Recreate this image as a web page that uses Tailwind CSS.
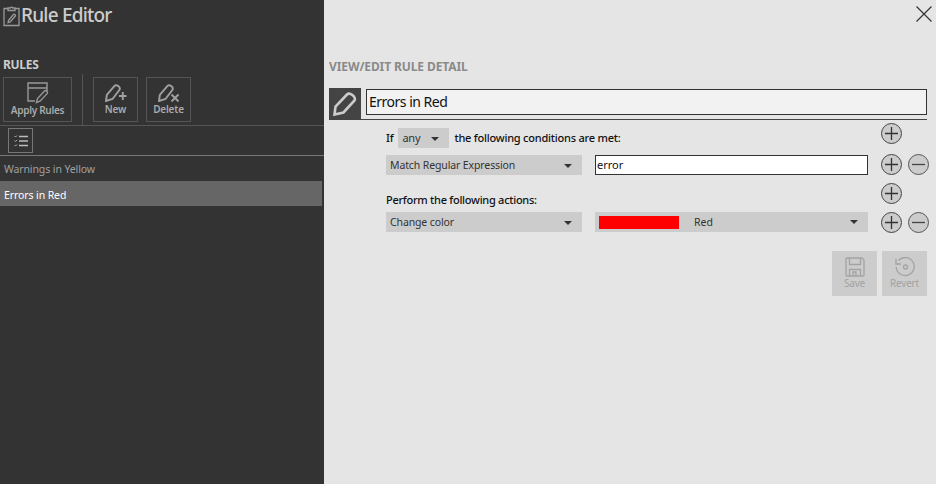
<!DOCTYPE html>
<html>
<head>
<meta charset="utf-8">
<title>Rule Editor</title>
<script src="https://cdn.jsdelivr.net/npm/@tailwindcss/browser@4"></script>
</head>
<body class="m-0 overflow-hidden">
<div class="flex w-[936px] h-[484px] overflow-hidden font-['Noto_Sans',sans-serif] bg-[#e5e5e5]">

  <!-- left panel -->
  <div class="w-[324px] h-full shrink-0 bg-[#333333] flex flex-col">
    <div class="h-[30px] flex items-center pl-[3px] pt-[1px]">
      <svg class="w-[18px] h-[22px]" viewBox="0 0 18 22" fill="none" stroke="#999999" stroke-width="1.300">
        <path d="M5 3.500H1v17h15v-17h-4"/><path d="M5 5.500V3h2.200a1.400 1.400 0 0 1 2.600 0H12v2.500z"/>
        <path d="M5.500 15.500l5-6c.8-.9 2.600.4 1.800 1.500l-5 6-2.200.6z"/>
      </svg>
      <span class="text-[19px] leading-none font-medium text-[#cccccc] tracking-[-0.8px]">Rule Editor</span>
    </div>
    <div class="mt-[28px] pl-[3px] h-[14px] flex items-center text-[12px] font-bold text-[#cccccc] tracking-[-0.3px]">RULES</div>

    <!-- toolbar -->
    <div class="mt-[2px] h-[52px] flex pl-[3px] border-b border-[#555555] items-start">
      <button class="mt-[3px] w-[69px] h-[45px] border border-[#555555] flex flex-col items-center">
        <svg class="w-[22px] h-[22px] mt-[4px]" viewBox="0 0 22 22" fill="none" stroke="#999999" stroke-width="1.400">
          <path d="M1 1h19v5H1zM1 6v13h7M20 6v3"/><path d="M9.500 20.500l1-4 7-7.500c1.200-1.200 3.800.8 2.800 2.400l-7 7.600z"/>
        </svg>
        <span class="text-[10px] leading-[12px] font-semibold text-[#aaaaaa] tracking-[-0.3px]">Apply Rules</span>
      </button>
      <div class="w-px h-[51px] bg-[#555555] mx-[10px]"></div>
      <button class="mt-[3px] w-[45px] h-[45px] border border-[#555555] flex flex-col items-center">
        <svg class="w-[22px] h-[18px] mt-[6px]" viewBox="0 0 22 18" fill="none" stroke="#a0a0a0" stroke-width="1.900">
          <path d="M1 17l.8-6L9.500 1.800c1.800-1.800 6.500 1.200 5 4L7.500 15z"/><path d="M14 12h7.500M17.800 8v8"/>
        </svg>
        <span class="text-[10px] leading-[12px] mt-[1px] font-semibold text-[#aaaaaa] tracking-[-0.2px]">New</span>
      </button>
      <button class="mt-[3px] ml-[8px] w-[45px] h-[45px] border border-[#555555] flex flex-col items-center">
        <svg class="w-[22px] h-[18px] mt-[6px]" viewBox="0 0 22 18" fill="none" stroke="#a0a0a0" stroke-width="1.900">
          <path d="M1 17l.8-6L9.500 1.800c1.800-1.800 6.500 1.200 5 4L7.500 15z"/><path d="M13.500 10.500l7 7M20.500 10.500l-7 7"/>
        </svg>
        <span class="text-[10px] leading-[12px] mt-[1px] font-semibold text-[#aaaaaa] tracking-[-0.2px]">Delete</span>
      </button>
    </div>

    <!-- list tools -->
    <div class="h-[30px] pl-[8px] pt-[2px] border-b border-[#777777]">
      <button class="w-[25px] h-[25px] border border-[#777777] flex items-center justify-center">
        <svg class="w-[14px] h-[12px]" viewBox="0 0 14 12" fill="none" stroke="#bbbbbb">
          <path d="M5 1.500h9M5 6h9M5 10.500h9" stroke-width="1.300"/>
          <path d="M.5 1l1 1 1.500-1.500M.5 5.500l1 1 1.500-1.500M.5 10l1 1 1.500-1.500" stroke-width=".9"/>
        </svg>
      </button>
    </div>

    <!-- rules list -->
    <div class="h-[25px] pl-[4px] pt-[3px] flex items-center text-[10.500px] tracking-[-0.1px] text-[#a0a0a0]">Warnings in Yellow</div>
    <div class="h-[25px] w-[322px] pl-[4px] pt-[4px] flex items-center text-[10.500px] tracking-[-0.1px] text-white bg-[#666666]">Errors in Red</div>
  </div>

  <!-- right panel -->
  <div class="relative w-[612px] min-w-0 h-full pl-[5px] pr-[9px]">
    <button class="absolute top-[6px] right-[4px] w-[16px] h-[16px]">
      <svg class="w-[16px] h-[16px]" viewBox="0 0 16 16" stroke="#333333" stroke-width="1.200"><path d="M.5.500l15 15M15.500.500l-15 15"/></svg>
    </button>

    <div class="pt-[60px] h-[74px] text-[12px] leading-[14px] font-bold text-[#8a8a8a] tracking-[-0.1px]">VIEW/EDIT RULE DETAIL</div>

    <!-- rule name -->
    <div class="mt-[14px] h-[32px] flex border-b border-[#444444]">
      <div class="w-[32px] h-[31px] bg-[#444444] flex items-center justify-center shrink-0">
        <svg class="w-[24px] h-[24px]" viewBox="0 0 24 24" fill="none" stroke="#cccccc" stroke-width="2.600">
          <path d="M1.500 22.500l1-8L14 2.500c2.500-2.500 9.500 2 7.500 6L10.500 20.500z"/>
        </svg>
      </div>
      <div class="ml-[5px] mt-[1px] flex-1 h-[26px] bg-[#f2f2f2] border border-[#333333] pl-[2px] pb-[1px] flex items-center text-[14px] tracking-[-0.5px] text-[#111111]">Errors in Red</div>
    </div>

    <!-- conditions and actions -->
    <div class="mt-[3px] ml-[57px] mr-[-2px] flex flex-col">
      <div class="h-[21px] flex">
        <div class="w-[482px] h-[21px] pt-[5px] flex text-[11px] font-medium tracking-[-0.22px] text-[#111111]">
          <span class="h-[20px] leading-[20px]">If</span>
          <div class="ml-[5px] w-[51px] h-[20px] bg-[#cccccc] pl-[4px] pt-[1px] pr-[10px] flex items-center justify-between font-normal text-[#333333]">any<i class="block w-0 h-0 border-x-[4px] border-x-transparent border-t-[4px] border-t-[#333333]"></i></div>
          <span class="ml-[5px] h-[20px] leading-[20px]">the following conditions are met:</span>
        </div>
        <button class="ml-[13px] w-[21px] h-[21px] rounded-full border-[1.500px] border-[#444444] bg-[#cccccc] flex items-center justify-center"><svg class="w-[13px] h-[13px]" viewBox="0 0 13 13" stroke="#333333" stroke-width="1.300"><path d="M0 6.500h13M6.500 0v13"/></svg></button>
      </div>

      <div class="mt-[10px] h-[21px] flex">
        <div class="w-[196px] h-[20px] mt-[1px] bg-[#cccccc] pl-[4px] pr-[10px] pt-[1px] flex items-center justify-between text-[10.500px] tracking-[-0.12px] text-[#333333]">Match Regular Expression<i class="block w-0 h-0 border-x-[4px] border-x-transparent border-t-[4px] border-t-[#333333]"></i></div>
        <div class="ml-[13px] w-[273px] h-[20px] mt-[1px] bg-white border border-[#333333] pl-[1px] flex items-center text-[11px] text-[#111111]">error</div>
        <button class="ml-[13px] w-[21px] h-[21px] rounded-full border-[1.500px] border-[#444444] bg-[#cccccc] flex items-center justify-center"><svg class="w-[13px] h-[13px]" viewBox="0 0 13 13" stroke="#333333" stroke-width="1.300"><path d="M0 6.500h13M6.500 0v13"/></svg></button>
        <button class="ml-[6px] w-[21px] h-[21px] rounded-full border-[1.500px] border-[#555555] bg-[#cccccc] flex items-center justify-center"><svg class="w-[13px] h-[13px]" viewBox="0 0 13 13" stroke="#444444" stroke-width="1.300"><path d="M0 6.500h13"/></svg></button>
      </div>

      <div class="mt-[8px] h-[21px] flex">
        <div class="w-[482px] h-[21px] pt-[9px] text-[11px] leading-[16px] font-medium tracking-[-0.27px] text-[#111111]">Perform the following actions:</div>
        <button class="ml-[13px] w-[21px] h-[21px] rounded-full border-[1.500px] border-[#444444] bg-[#cccccc] flex items-center justify-center"><svg class="w-[13px] h-[13px]" viewBox="0 0 13 13" stroke="#333333" stroke-width="1.300"><path d="M0 6.500h13M6.500 0v13"/></svg></button>
      </div>

      <div class="mt-[8px] h-[21px] flex">
        <div class="w-[196px] h-[20px] bg-[#cccccc] pl-[4px] pr-[10px] pt-[2px] flex items-center justify-between text-[10.500px] tracking-[-0.12px] text-[#333333]">Change color<i class="block w-0 h-0 border-x-[4px] border-x-transparent border-t-[4px] border-t-[#333333]"></i></div>
        <div class="ml-[13px] w-[273px] h-[20px] bg-[#cccccc] pl-[4px] pr-[10px] flex items-center text-[10.500px] text-[#333333]">
          <span class="w-[80px] h-[13px] bg-[#ff0000]"></span>
          <span class="ml-[15px] flex-1 pt-[2px]">Red</span>
          <i class="block w-0 h-0 border-x-[4px] border-x-transparent border-t-[4px] border-t-[#333333]"></i>
        </div>
        <button class="ml-[13px] w-[21px] h-[21px] rounded-full border-[1.500px] border-[#444444] bg-[#cccccc] flex items-center justify-center"><svg class="w-[13px] h-[13px]" viewBox="0 0 13 13" stroke="#333333" stroke-width="1.300"><path d="M0 6.500h13M6.500 0v13"/></svg></button>
        <button class="ml-[6px] w-[21px] h-[21px] rounded-full border-[1.500px] border-[#555555] bg-[#cccccc] flex items-center justify-center"><svg class="w-[13px] h-[13px]" viewBox="0 0 13 13" stroke="#444444" stroke-width="1.300"><path d="M0 6.500h13"/></svg></button>
      </div>
    </div>

    <!-- save / revert -->
    <div class="mt-[18px] flex justify-end gap-[5px]">
      <button class="w-[45px] h-[45px] bg-[#cccccc] flex flex-col items-center">
        <svg class="w-[20px] h-[20px] mt-[6px]" viewBox="0 0 20 20" fill="none" stroke="#a3a3a3" stroke-width="1.300">
          <path d="M2 1h15l2 2v15a1 1 0 0 1-1 1H2a1 1 0 0 1-1-1V2a1 1 0 0 1 1-1zM4.500 1v6.500h11V1M4.500 19v-6.500h11V19M8 19v-4h3v4"/>
        </svg>
        <span class="text-[10px] leading-[12px] tracking-[-0.2px] text-[#a3a3a3]">Save</span>
      </button>
      <button class="w-[45px] h-[45px] bg-[#cccccc] flex flex-col items-center">
        <svg class="w-[20px] h-[20px] mt-[6px]" viewBox="0 0 20 20" fill="none" stroke="#a3a3a3" stroke-width="1.300">
          <path d="M3.500 3.500A9 9 0 1 1 1.200 10"/><path d="M1 2v5h5"/><circle cx="10.500" cy="10" r="2"/>
        </svg>
        <span class="text-[10px] leading-[12px] tracking-[-0.2px] text-[#a3a3a3]">Revert</span>
      </button>
    </div>
  </div>
</div>
</body>
</html>
